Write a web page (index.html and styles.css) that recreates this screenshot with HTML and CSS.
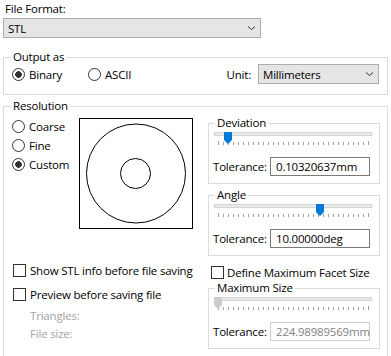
FILE: index.html
```html
<!DOCTYPE html>
<html lang="en">
<head>
  <meta charset="UTF-8" />
  <title>STL Export Options</title>
  <link rel="stylesheet" href="styles.css">
</head>
<body>
  <div class="dialog">
    <label class="field-label">File Format:</label>
    <div class="combo combo-format">
      <span>STL</span>
      <svg class="chevron" width="7" height="4" viewBox="0 0 7 4"><path d="M0 0.5 L3.5 3.5 L7 0.5" /></svg>
    </div>

    <fieldset class="group group-output">
      <legend>Output as</legend>
      <div class="output-row">
        <label class="radio radio-binary"><span class="radio-mark checked"></span>Binary</label>
        <label class="radio"><span class="radio-mark"></span>ASCII</label>
        <span class="unit-label">Unit:</span>
        <div class="combo combo-unit">
          <span>Millimeters</span>
          <svg class="chevron" width="7" height="4" viewBox="0 0 7 4"><path d="M0 0.5 L3.5 3.5 L7 0.5" /></svg>
        </div>
      </div>
    </fieldset>

    <fieldset class="group group-resolution">
      <legend>Resolution</legend>
      <div class="res-grid">

        <div class="res-top-left">
          <div class="radio-list">
            <label class="radio"><span class="radio-mark"></span>Coarse</label>
            <label class="radio"><span class="radio-mark"></span>Fine</label>
            <label class="radio"><span class="radio-mark checked"></span>Custom</label>
          </div>
          <svg class="preview" width="114" height="111" viewBox="0 0 114 111">
            <rect x="0.5" y="0.5" width="113" height="110" fill="#fff" stroke="#000" />
            <circle cx="57" cy="55.5" r="49.5" fill="none" stroke="#000" />
            <circle cx="56.5" cy="55.5" r="15" fill="none" stroke="#000" />
          </svg>
        </div>

        <div class="res-top-right">
          <fieldset class="group sub">
            <legend>Deviation</legend>
            <div class="slider">
              <div class="track"></div>
              <svg class="thumb" style="left: 10px" width="8" height="12" viewBox="0 0 8 12"><path d="M0 0 H8 V8 L4 12 L0 8 Z" /></svg>
              <div class="ticks"></div>
            </div>
            <div class="tol-row">
              <span>Tolerance:</span>
              <div class="textbox">0.10320637mm</div>
            </div>
          </fieldset>

          <fieldset class="group sub angle">
            <legend>Angle</legend>
            <div class="slider">
              <div class="track"></div>
              <svg class="thumb" style="left: 102px" width="8" height="12" viewBox="0 0 8 12"><path d="M0 0 H8 V8 L4 12 L0 8 Z" /></svg>
              <div class="ticks"></div>
            </div>
            <div class="tol-row">
              <span>Tolerance:</span>
              <div class="textbox">10.00000deg</div>
            </div>
          </fieldset>
        </div>

        <div class="res-bottom-left">
          <label class="check"><span class="check-mark"></span>Show STL info before file saving</label>
          <label class="check second"><span class="check-mark"></span>Preview before saving file</label>
          <div class="info first">Triangles:</div>
          <div class="info">File size:</div>
        </div>

        <div class="res-bottom-right">
          <label class="check facet"><span class="check-mark"></span>Define Maximum Facet Size</label>
          <fieldset class="group sub disabled">
            <legend>Maximum Size</legend>
            <div class="slider">
              <div class="track"></div>
              <svg class="thumb" style="left: 0px" width="8" height="12" viewBox="0 0 8 12"><path d="M0 0 H8 V8 L4 12 L0 8 Z" /></svg>
              <div class="ticks"></div>
            </div>
            <div class="tol-row">
              <span>Tolerance:</span>
              <div class="textbox">224.98989569mm</div>
            </div>
          </fieldset>
        </div>

      </div>
    </fieldset>
  </div>
</body>
</html>
```

FILE: styles.css
```css
body {
  margin: 0;
  background: #fff;
  font-family: "Segoe UI", "Open Sans", sans-serif;
  font-size: 11.5px;
  letter-spacing: -0.2px;
  color: #000;
}

.dialog {
  width: 385px;
  padding: 1px 0 0 3px;
}

.field-label {
  display: block;
  margin-left: 2px;
  line-height: 16px;
}

/* combo boxes */
.combo {
  box-sizing: border-box;
  height: 20px;
  border: 1px solid #adadad;
  background: #e5e5e5;
  display: flex;
  align-items: center;
  justify-content: space-between;
  padding: 0 5px 0 4px;
}

.combo-format {
  width: 258px;
  margin-top: 1px;
}

.combo-unit {
  width: 121px;
  padding-left: 4px;
}

.chevron path {
  fill: none;
  stroke: #333;
  stroke-width: 1;
}

/* group boxes */
fieldset.group {
  margin: 0;
  padding: 0;
  border: 1px solid #dcdcdc;
  min-width: 0;
}

fieldset.group legend {
  padding: 0 2px;
  margin-left: 7px;
  line-height: 14px;
}

.group-output {
  margin-top: 12px !important;
}

.output-row {
  display: flex;
  align-items: center;
  height: 20px;
  padding: 0 8px 10px 8px;
}

.unit-label {
  margin-left: auto;
  margin-right: 7px;
}

/* radios and checks */
.radio, .check {
  display: flex;
  align-items: center;
  white-space: nowrap;
}

.radio-binary {
  width: 76px;
}

.radio-mark, .check-mark {
  box-sizing: border-box;
  width: 13px;
  height: 13px;
  border: 1px solid #333;
  background: #fff;
  margin-right: 4px;
  flex-shrink: 0;
}

.radio-mark {
  border-radius: 50%;
}

.radio-mark.checked {
  background: radial-gradient(circle, #333 3px, #fff 3.6px);
}

.group-resolution {
  margin-top: 4px !important;
}

.res-grid {
  display: grid;
  grid-template-columns: 196px 172px;
  padding: 0 7px 20px 8px;
}

.res-top-left {
  display: flex;
  align-items: flex-start;
}

.radio-list {
  width: 67px;
  padding-top: 4px;
}

.radio-list .radio {
  height: 19px;
}

.preview {
  display: block;
  margin-top: 5px;
  shape-rendering: crispEdges;
}

.preview circle {
  shape-rendering: auto;
}

.res-top-right {
  padding-top: 3px;
}

fieldset.sub legend {
  margin-left: 6px;
}

fieldset.sub.angle {
  margin-top: 4px;
}

/* slider */
.slider {
  position: relative;
  width: 158px;
  margin: 1px 0 0 5px;
}

.track {
  box-sizing: border-box;
  height: 4px;
  margin-top: 2px;
  background: #e7eaea;
  border: 1px solid #d6d6d6;
}

.thumb {
  position: absolute;
  top: 0;
  fill: #0078d7;
}

.ticks {
  box-sizing: border-box;
  height: 4px;
  width: 151px;
  margin: 5px 0 0 4px;
  border-left: 1px solid #a0a0a0;
  border-right: 1px solid #a0a0a0;
  background: repeating-linear-gradient(to right, #a0a0a0 0 1px, transparent 1px 5px) 4px 1px / 142px 3px no-repeat;
}

.disabled .thumb {
  fill: #cccccc;
}

.tol-row {
  display: flex;
  align-items: center;
  justify-content: space-between;
  margin-top: 12px;
  padding: 0 9px 7px 4px;
}

.textbox {
  box-sizing: border-box;
  width: 100px;
  height: 19px;
  border: 1px solid #7a7a7a;
  background: #fff;
  padding-left: 5px;
  line-height: 17px;
  white-space: nowrap;
}

.disabled .textbox {
  border-color: #cccccc;
  color: #838383;
}

.res-bottom-left {
  padding-left: 1px;
}

.check {
  height: 18px;
}

.res-bottom-left .check {
  margin-top: 5px;
}

.res-bottom-left .check.second {
  margin-top: 6px;
}

.info {
  line-height: 18px;
  padding-left: 17px;
  color: #a3a3a3;
}

.info.first {
  margin-top: 4px;
}

.check.facet {
  margin: 7px 0 0 3px;
}

.check.facet .check-mark {
  margin-right: 3px;
}
```
